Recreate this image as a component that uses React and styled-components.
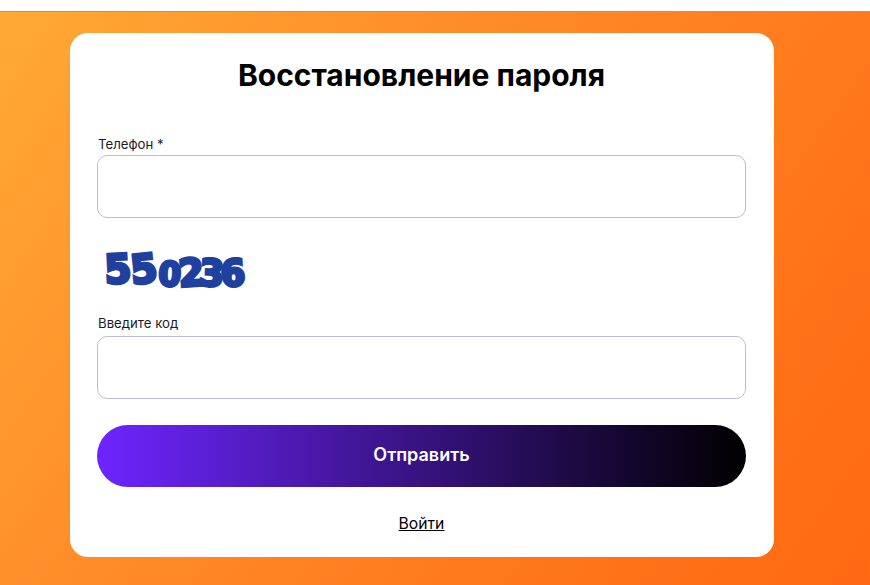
import React from "react";
import styled, { createGlobalStyle } from "styled-components";

const Global = createGlobalStyle`
  html, body { margin: 0; padding: 0; background: #fff; }
  body { font-family: Inter, "Noto Sans", "Liberation Sans", sans-serif; overflow: hidden; }
`;
const Page = styled.div`
  margin-top: 11px;
  height: 574px;
  box-sizing: border-box;
  padding: 21px 96px 28px 70px;
  background: linear-gradient(125deg, #ffa935 0%, #ff8a28 40%, #ff6f16 85%, #ff6a12 100%);
  border-top: 1px solid #ef8a26;
`;
const Card = styled.main`
  height: 524px;
  box-sizing: border-box;
  background: #fff;
  border-radius: 18px;
  padding: 22px 28px 0 27px;
  display: flex;
  flex-direction: column;
`;
const Title = styled.h1`
  margin: 0;
  font-size: 30px;
  line-height: 40px;
  font-weight: 700;
  color: #000;
  text-align: center;
`;
const Field = styled.label`
  display: flex;
  flex-direction: column;
  gap: ${(p) => p.$gap}px;
  margin-top: ${(p) => p.$top}px;
`;
const Label = styled.span`
  font-size: 13.2px;
  line-height: 16px;
  padding-left: 1px;
  color: #1a1a2a;
`;
const Input = styled.input`
  box-sizing: border-box;
  width: 100%;
  height: 62.5px;
  border: 1px solid #bfbbd6;
  border-radius: 10px;
  background: #fff;
  outline: none;
`;
const Captcha = styled.div`
  display: flex;
  align-items: center;
  height: 50.5px;
  margin: 29px 0 0 9px;
  font-family: "DejaVu Sans", sans-serif;
  font-weight: 700;
  color: #20409f;
`;
const Digit = styled.span`
  display: inline-block;
  font-size: ${(p) => p.$size}px;
  line-height: 1;
  margin-left: ${(p) => p.$ml}px;
  transform: translateY(${(p) => p.$y}px) rotate(${(p) => p.$r}deg) scale(1.04, 1.08);
  -webkit-text-stroke: 3px #20409f;
`;
const Submit = styled.button`
  margin-top: 26.5px;
  height: 62px;
  padding: 0 0 3px;
  border: none;
  border-radius: 31px;
  background: linear-gradient(90deg, #6d25ff 0%, #000 100%);
  color: #fff;
  font: 600 18px Inter, "Noto Sans", sans-serif;
`;
const Login = styled.a`
  align-self: center;
  margin-top: 27px;
  font-size: 15.7px;
  line-height: 20px;
  color: #000;
  text-decoration: underline;
`;

const digits = [
  { c: "5", size: 37, ml: -1, y: -2, r: -3 },
  { c: "5", size: 37, ml: 0, y: -2, r: -6 },
  { c: "0", size: 31, ml: 2, y: 3, r: 3 },
  { c: "2", size: 35, ml: -1, y: 2, r: -4 },
  { c: "3", size: 34, ml: -3, y: 1, r: 3 },
  { c: "6", size: 34, ml: -3, y: 1, r: -3 },
];

export default function App() {
  return (
    <>
      <Global />
      <Page>
        <Card>
          <Title>Восстановление пароля</Title>
          <Field $top={41} $gap={3}>
            <Label>Телефон *</Label>
            <Input type="text" />
          </Field>
          <Captcha>
            {digits.map((d, i) => (
              <Digit key={i} $size={d.size} $ml={d.ml} $y={d.y} $r={d.r}>{d.c}</Digit>
            ))}
          </Captcha>
          <Field $top={18} $gap={5}>
            <Label>Введите код</Label>
            <Input type="text" />
          </Field>
          <Submit type="button">Отправить</Submit>
          <Login href="#">Войти</Login>
        </Card>
      </Page>
    </>
  );
}
